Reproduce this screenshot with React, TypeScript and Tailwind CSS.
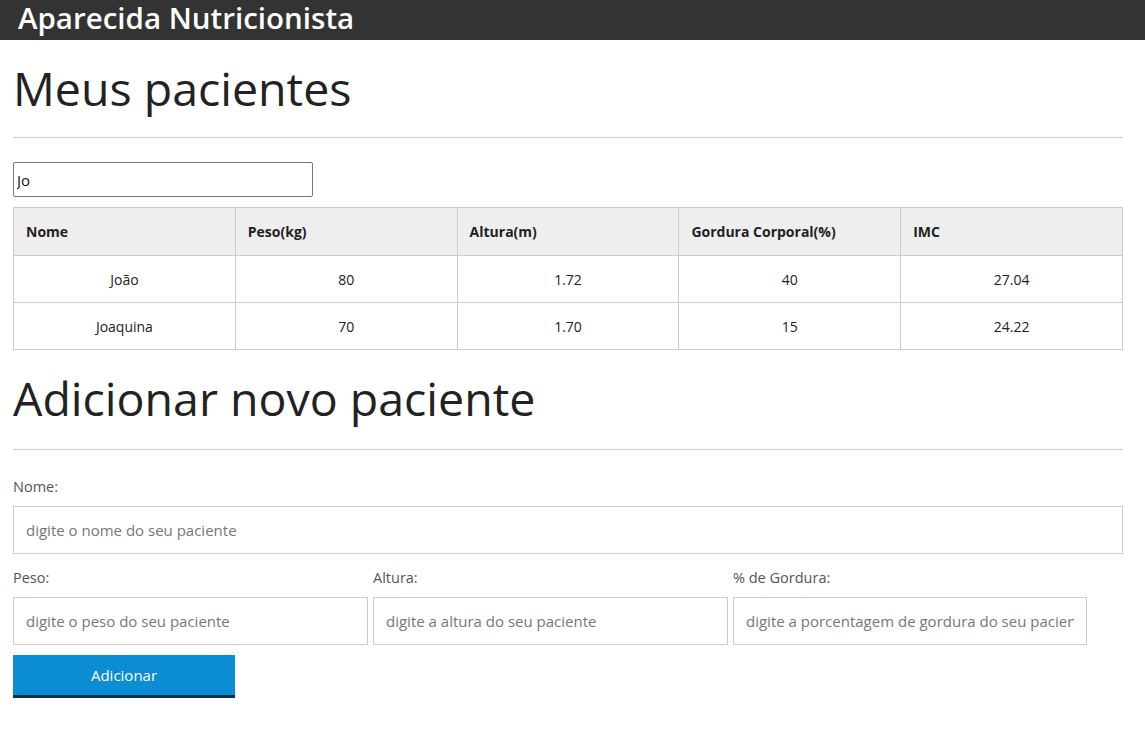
const pacientes = [
  { nome: "João", peso: "80", altura: "1.72", gordura: "40", imc: "27.04" },
  { nome: "Joaquina", peso: "70", altura: "1.70", gordura: "15", imc: "24.22" },
]

const colunas = ["Nome", "Peso(kg)", "Altura(m)", "Gordura Corporal(%)", "IMC"]

function Campo({ label, placeholder }: { label: string; placeholder: string }) {
  return (
    <div className="flex flex-col">
      <label className="text-[14.5px] text-[#555] leading-[20px] h-[20px]">{label}</label>
      <input
        placeholder={placeholder}
        className="mt-[9px] h-[48px] w-full border border-[#ccc] px-[12px] text-[15px] text-[#333] placeholder:text-[#777] outline-none"
      />
    </div>
  )
}

export default function App() {
  return (
    <div className="min-h-[743px] bg-white text-[#222]" style={{ fontFamily: '"Open Sans", "Noto Sans", sans-serif' }}>
      <header className="h-[40px] bg-[#333] flex items-start">
        <h1 className="px-[18px] text-[29.5px] font-semibold leading-[36px] text-white">Aparecida Nutricionista</h1>
      </header>

      <main className="px-[13px] w-[1136px]">
        <h2 className="mt-[19px] text-[46.5px] leading-[58px] font-normal text-[#222]">Meus pacientes</h2>
        <hr className="mt-[20px] border-t border-[#ccc]" />

        <input
          defaultValue="Jo"
          className="mt-[24px] h-[35px] w-[300px] border border-[#767676] rounded-[2px] px-[3px] text-[15px] text-[#111] outline-none"
        />

        <table className="mt-[10px] w-full border-collapse border border-[#ccc] text-[14px]">
          <thead>
            <tr className="bg-[#eee] h-[48px]">
              {colunas.map((c) => (
                <th key={c} className="w-1/5 border border-[#ccc] px-[12px] text-left font-bold text-[#222]">
                  {c}
                </th>
              ))}
            </tr>
          </thead>
          <tbody>
            {pacientes.map((p) => (
              <tr key={p.nome} className="h-[47px]">
                <td className="border border-[#ccc] text-center">{p.nome}</td>
                <td className="border border-[#ccc] text-center">{p.peso}</td>
                <td className="border border-[#ccc] text-center">{p.altura}</td>
                <td className="border border-[#ccc] text-center">{p.gordura}</td>
                <td className="border border-[#ccc] text-center">{p.imc}</td>
              </tr>
            ))}
          </tbody>
        </table>

        <h2 className="mt-[19px] text-[46.5px] leading-[58px] font-normal text-[#222]">Adicionar novo paciente</h2>
        <hr className="mt-[22px] border-t border-[#ccc]" />

        <form className="mt-[27px]">
          <Campo label="Nome:" placeholder="digite o nome do seu paciente" />
          <div className="mt-[14px] flex gap-[5px]">
            <div className="w-[355px]">
              <Campo label="Peso:" placeholder="digite o peso do seu paciente" />
            </div>
            <div className="w-[355px]">
              <Campo label="Altura:" placeholder="digite a altura do seu paciente" />
            </div>
            <div className="w-[354px]">
              <Campo label="% de Gordura:" placeholder="digite a porcentagem de gordura do seu paciente" />
            </div>
          </div>
          <button
            type="button"
            className="mt-[10px] h-[43px] w-[222px] bg-[#0b8dd4] border-b-[3px] border-[#07304d] text-[15px] text-white"
          >
            Adicionar
          </button>
        </form>
      </main>
    </div>
  )
}
